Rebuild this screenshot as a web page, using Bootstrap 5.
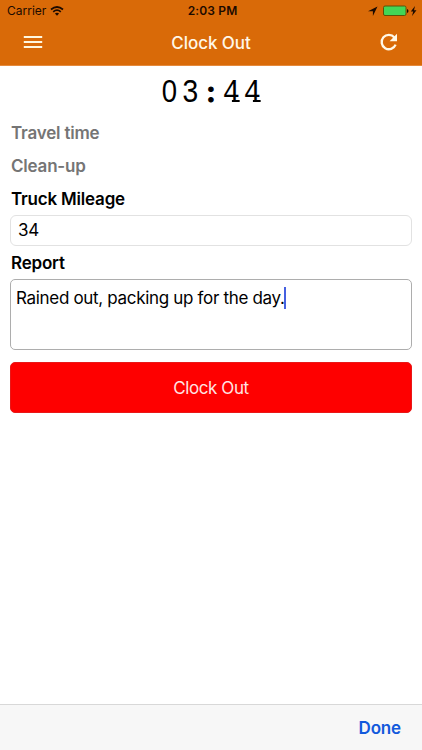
<!DOCTYPE html>
<html lang="en">
<head>
<meta charset="utf-8">
<meta name="viewport" content="width=device-width, initial-scale=1">
<title>Clock Out</title>
<link href="https://cdn.jsdelivr.net/npm/bootstrap@5.3.0/dist/css/bootstrap.min.css" rel="stylesheet">
<style>
body{font-family:Inter,"Liberation Sans",sans-serif;font-size:17px;line-height:24px;color:#000;background:#fff}
.topbar{height:66px;background:#d96a08;border-bottom:1px solid #e58a3c}
.status{height:22px;font-size:12px;line-height:22px;color:#1c0a00;padding:0 5px 0 7px}
.clock-time{font-weight:600;letter-spacing:.15px;padding-left:1px}
.side{width:120px}
.titlebar{height:43px;padding:0 23px 0 23px;color:#fff8e8}
.page-title{font-size:17px;font-weight:500;letter-spacing:-.05px;line-height:43px}
.timer{height:51px;font-family:"Liberation Mono",monospace;font-size:33px;line-height:1;padding-top:9px}
.timer span{width:20.8px;text-align:center;transform:scaleX(.86)}
.timer .zero{font-family:"Liberation Sans",sans-serif;font-size:32px}
.timer .colon{font-family:Lato,sans-serif;font-weight:900;font-size:28px;transform:none;-webkit-text-stroke:1px #000}
.timer .four{position:relative}
.timer .four::after{content:"";position:absolute;right:1px;top:23px;width:9px;height:2px;background:#000}
.form-area{padding:0 10px}
.field-label{height:33px;line-height:33px;font-weight:600;font-size:17px;letter-spacing:-.2px;padding-left:1px}
.muted-label{color:#757575}
.mileage{height:31px;border:1px solid #e2e2e2;border-radius:6px;padding:0 7px 1px;line-height:28px;font-size:17px;letter-spacing:-.2px;color:#000;margin-top:-1px}
.report-label{padding-top:1px}
.report{height:71px;border:1px solid #adadad;border-radius:5px;padding:7px 5px;font-size:17px;line-height:22px;letter-spacing:-.32px}
.caret{width:2px;height:22px;background:#4560e0;margin-left:-1px}
.btn-out{height:51px;border-radius:5px;background:#fe0000;color:#ffe3e3;font-size:17px;letter-spacing:-.42px;border:1px solid #e81818;margin-top:12px;padding-top:8px}
.keybar{height:46px;background:#f7f7f7;border-top:1px solid #d8d8d8;padding-right:21px}
.done{color:#1259dc;font-size:17px;font-weight:600;letter-spacing:-.15px}
</style>
<script src="https://cdn.jsdelivr.net/npm/bootstrap@5.3.0/dist/js/bootstrap.bundle.min.js"></script>
</head>
<body class="d-flex flex-column vh-100 overflow-hidden">
<header class="topbar flex-shrink-0">
  <div class="status d-flex justify-content-between">
    <div class="side d-flex align-items-center"><span>Carrier</span>
      <svg class="ms-1" width="14" height="10" viewBox="0 0 14 10" fill="none" stroke="#1c0a00" stroke-width="1.7"><path d="M1 3.5Q7-1.5 13 3.5M3.2 5.8Q7 2.5 10.8 5.8"/><path d="M4.9 7.5Q7 5.8 9.1 7.5L7 9.7Z" fill="#1c0a00" stroke="none"/></svg>
    </div>
    <div class="clock-time">2:03 PM</div>
    <div class="side d-flex align-items-center justify-content-end">
      <svg width="49" height="12" viewBox="0 0 49 12"><path d="M9.5 1.6 0 6.2H4.9V11Z" fill="#1c0a00"/><rect x="15.5" y="1" width="22.5" height="9.5" rx="1.5" fill="#42d656" stroke="#5b5208"/><path d="M39 4v4q1.5-.3 1.5-2t-1.5-2Z" fill="#1c0a00"/><path d="M47 1 42.8 6.6h2.4L44 11l4.5-5.8H46Z" fill="#1c0a00"/></svg>
    </div>
  </div>
  <div class="titlebar d-flex justify-content-between">
    <svg width="20" height="43" viewBox="0 0 20 43"><path d="M.8 15h18.4M.8 20h18.4M.8 25h18.4" stroke="#fff8e0" stroke-width="2.2"/></svg>
    <div class="page-title">Clock Out</div>
    <svg width="20" height="43" viewBox="0 0 20 43"><path d="M15.4 15.4A7.2 7.2 0 1 0 16.6 22.6" fill="none" stroke="#fff8e8" stroke-width="2.3"/><path d="M18 11.8v7.4h-7.4Z" fill="#fff8e8"/></svg>
  </div>
</header>
<main class="form-area flex-grow-1">
  <div class="timer d-flex justify-content-center align-items-baseline"><span class="zero">0</span><span>3</span><span class="colon">:</span><span class="four">4</span><span class="four">4</span></div>
  <div class="field-label muted-label">Travel time</div>
  <div class="field-label muted-label">Clean-up</div>
  <label class="field-label d-block" for="mileage">Truck Mileage</label>
  <input id="mileage" class="mileage w-100 d-block" value="34">
  <div class="field-label report-label">Report</div>
  <div class="report d-flex"><span>Rained out, packing up for the day.</span><span class="caret"></span></div>
  <button class="btn btn-out w-100">Clock Out</button>
</main>
<footer class="keybar flex-shrink-0 d-flex align-items-center justify-content-end"><span class="done">Done</span></footer>
</body>
</html>
